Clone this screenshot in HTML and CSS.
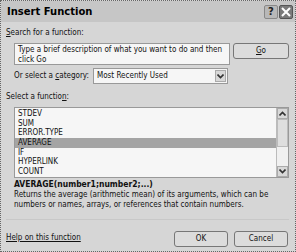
FILE: index.html
```html
<!DOCTYPE html>
<html lang="en">
<head>
    <meta charset="UTF-8">
    <title>Insert Function</title>
    <link rel="stylesheet" href="styles.css">
</head>
<body>

<div class="dialog">
    <!-- Title bar -->
    <div class="title-bar">
        <span class="title">Insert Function</span>
        <span class="title-buttons">
            <span class="tbtn help">?</span>
            <span class="tbtn close">
                <svg width="10" height="10" viewBox="0 0 10 10"><path d="M1 1 L9 9 M9 1 L1 9" stroke="#fff" stroke-width="2"/></svg>
            </span>
        </span>
    </div>

    <div class="content">
        <div class="label"><u>S</u>earch for a function:</div>
        <div class="search-row">
            <div class="search-box">Type a brief description of what you want to do and then click Go</div>
            <div class="button go"><u>G</u>o</div>
        </div>

        <div class="category-row">
            <span>Or select a <u>c</u>ategory:</span>
            <div class="select">
                <span>Most Recently Used</span>
                <span class="drop">
                    <svg width="7" height="5" viewBox="0 0 7 5"><path d="M0.5 0.5 L3.5 3.5 L6.5 0.5" stroke="#333" stroke-width="1.6" fill="none"/></svg>
                </span>
            </div>
        </div>

        <div class="label fn-label">Select a functio<u>n</u>:</div>
        <div class="listbox">
            <ul class="items">
                <li>STDEV</li>
                <li>SUM</li>
                <li>ERROR.TYPE</li>
                <li class="selected">AVERAGE</li>
                <li>IF</li>
                <li>HYPERLINK</li>
                <li>COUNT</li>
            </ul>
            <div class="scrollbar">
                <span class="arrow">
                    <svg width="7" height="5" viewBox="0 0 7 5"><path d="M0.5 4.5 L3.5 1.5 L6.5 4.5" stroke="#333" stroke-width="1.6" fill="none"/></svg>
                </span>
                <span class="thumb"></span>
                <span class="track"></span>
                <span class="arrow">
                    <svg width="7" height="5" viewBox="0 0 7 5"><path d="M0.5 0.5 L3.5 3.5 L6.5 0.5" stroke="#333" stroke-width="1.6" fill="none"/></svg>
                </span>
            </div>
        </div>

        <div class="syntax">AVERAGE(number1;number2;...)</div>
        <div class="description">Returns the average (arithmetic mean) of its arguments, which can be numbers or names, arrays, or references that contain numbers.</div>

        <div class="footer">
            <span class="help-link">Help on this function</span>
            <div class="buttons">
                <div class="button">OK</div>
                <div class="button">Cancel</div>
            </div>
        </div>
    </div>
</div>

</body>
</html>
```

FILE: styles.css
```css
body { margin: 0; background-color: #d4d4d4; font-family: "DejaVu Sans Condensed", "Liberation Sans", sans-serif; font-size: 8px; line-height: 10px; color: #111; }
.dialog { width: 296px; height: 252px; box-sizing: border-box; border: 1px dotted #666; background-color: #d6d6d6; }
.title-bar { height: 21px; display: flex; align-items: center; justify-content: space-between; padding: 0 2px 0 6px; background-color: #c6c6c6; }
.title { font-family: "DejaVu Sans", sans-serif; font-weight: bold; font-size: 10px; color: #000; }
.title-buttons { display: flex; gap: 1px; }
.tbtn { width: 14px; height: 14px; border-radius: 2px; box-sizing: border-box; display: flex; align-items: center; justify-content: center; }
.help { background-color: #b8b8b8; border: 1px solid #888; color: #222; font-weight: bold; font-size: 10px; font-family: "DejaVu Sans", sans-serif; }
.close { background-color: #7a7a7a; border: 1px solid #555; }
.content { padding: 6px 6px 0 5px; }
.search-row { display: flex; gap: 3px; margin: 5px 0 0 8px; }
.search-box { width: 216px; height: 22px; box-sizing: border-box; background-color: #f6f6f6; border: 1px solid #999; padding: 1px 3px; line-height: 9.5px; }
.button { width: 54px; height: 16px; box-sizing: border-box; border: 1px solid #777; border-radius: 3px; background-color: #dcdcdc; display: flex; align-items: center; justify-content: center; }
.go { width: 56px; }
.category-row { display: flex; align-items: center; gap: 4px; margin: 3px 0 0 8px; }
.select { width: 135px; height: 16px; box-sizing: border-box; border: 1px solid #999; background-color: #f6f6f6; display: flex; align-items: center; justify-content: space-between; padding-left: 3px; }
.drop { width: 11px; height: 12px; margin-right: 1px; background-color: #d8d8d8; border: 1px solid #aaa; box-sizing: border-box; display: flex; align-items: center; justify-content: center; }
.fn-label { margin-top: 8px; }
.listbox { display: flex; width: 275px; height: 71px; margin: 5px 0 0 8px; border: 1px solid #999; background-color: #f6f6f6; box-sizing: border-box; }
.items { list-style: none; margin: 0; padding: 1px 0 0 0; flex: 1; }
.items li { height: 9.7px; line-height: 9.7px; padding-left: 3px; }
.items li.selected { background-color: #a4a4a4; }
.scrollbar { width: 11px; display: flex; flex-direction: column; border-left: 1px solid #bbb; }
.arrow { height: 11px; background-color: #d8d8d8; border: 1px solid #aaa; box-sizing: border-box; display: flex; align-items: center; justify-content: center; }
.thumb { height: 28px; background-color: #dedede; border: 1px solid #bbb; box-sizing: border-box; }
.track { flex: 1; background-color: #f0f0f0; }
.syntax { margin: 1px 0 0 8px; font-weight: bold; font-size: 8.5px; }
.description { margin: 1px 0 0 8px; line-height: 9.5px; }
.footer { display: flex; align-items: center; justify-content: space-between; margin-top: 10px; border-top: 1px solid #c8c8c8; padding-top: 11px; }
.help-link { text-decoration: underline; margin-top: -3px; }
.buttons { display: flex; gap: 6px; margin-right: 1px; }
```
